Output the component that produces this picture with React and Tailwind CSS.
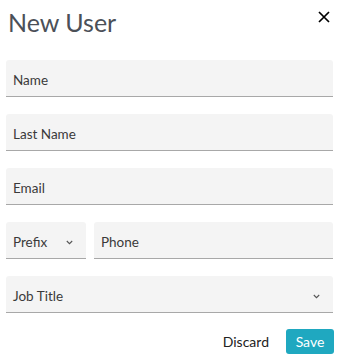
import React from 'react';

function Chevron() {
  return (
    <svg width="7" height="5" viewBox="0 0 7 5" fill="none">
      <path d="M0.8 1l2.7 2.7L6.2 1" stroke="#555" strokeWidth="1.1" />
    </svg>
  );
}

function Field({ label, className = '', chevron }) {
  return (
    <div className={`h-[37px] bg-[#f4f4f4] rounded-t-[3px] border-b border-[#a8a8a8] flex items-center pt-[5px] pl-[7px] pr-[13px] ${className}`}>
      <span className="text-[13.5px] text-[#3a3a3a] flex-1">{label}</span>
      {chevron && <Chevron />}
    </div>
  );
}

export default function App() {
  return (
    <div className="w-[345px] h-[361px] bg-white font-['Lato',sans-serif] px-[6px]">
      {/* header */}
      <div className="flex items-start justify-between h-[60px]">
        <h2 className="text-[25px] leading-none text-[#4b5058] pl-[2px] pt-[10px]">New User</h2>
        <button className="mt-[11px] mr-[9px]">
          <svg width="12" height="12" viewBox="0 0 12 12">
            <path d="M1 1l10 10M11 1L1 11" stroke="#000" strokeWidth="1.7" />
          </svg>
        </button>
      </div>

      <div className="flex flex-col gap-[17px] w-[327px]">
        <Field label="Name" />
        <Field label="Last Name" />
        <Field label="Email" />
        <div className="flex gap-[8px]">
          <Field label="Prefix" chevron className="w-[80px]" />
          <Field label="Phone" className="flex-1" />
        </div>
        <Field label="Job Title" chevron />
      </div>

      <div className="flex justify-end items-center gap-[17px] mt-[16px] w-[328px]">
        <button className="text-[14px] text-[#222]">Discard</button>
        <button className="h-[25px] w-[48px] rounded-[3px] bg-[#1fa8c0] text-white text-[14px]">Save</button>
      </div>
    </div>
  );
}
